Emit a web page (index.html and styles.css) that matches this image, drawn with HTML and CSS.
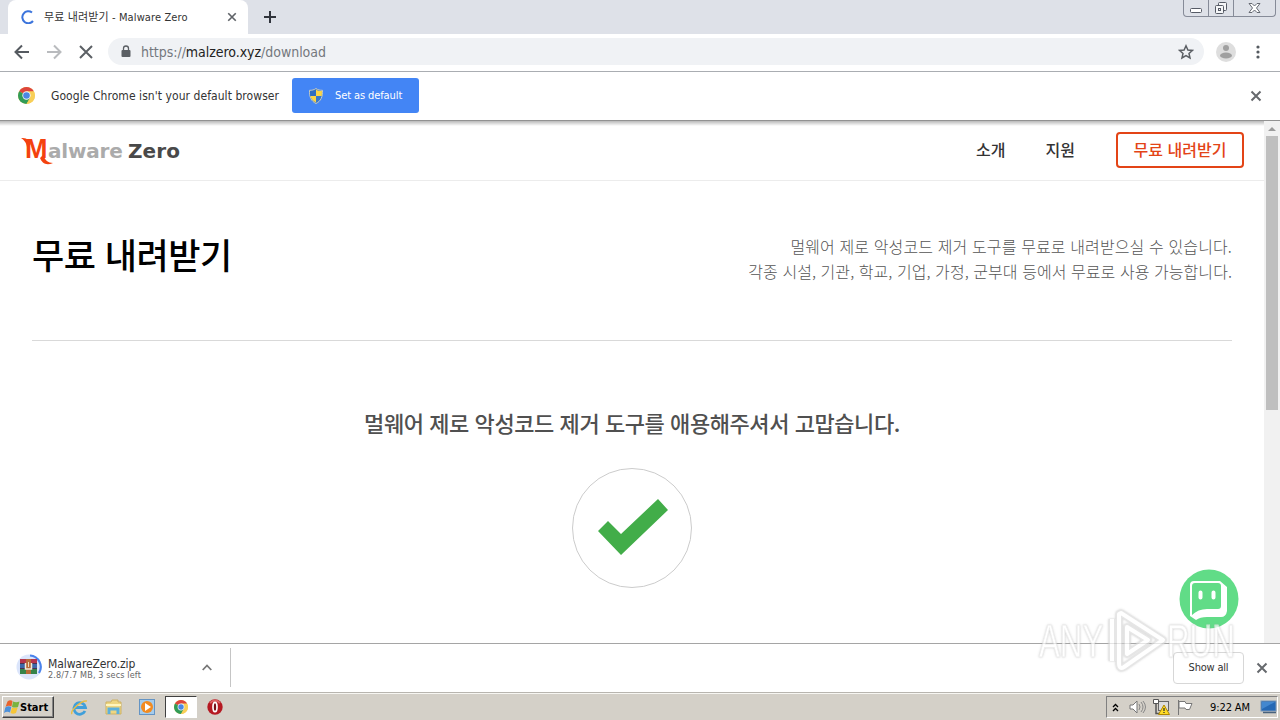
FILE: index.html
```html
<!DOCTYPE html>
<html lang="ko">
<head>
<meta charset="utf-8">
<title>무료 내려받기 - Malware Zero</title>
<link rel="stylesheet" href="styles.css">
</head>
<body>
<svg width="0" height="0" class="defs">
  <defs>
    <symbol id="chrome" viewBox="0 0 16 16">
      <circle cx="8" cy="8" r="8" fill="#f8cf58"/>
      <path d="M8 8 1.100 4A8 8 0 0 1 14.900 4Z" fill="#dd453c"/>
      <path d="M1.100 4A8 8 0 0 0 8 16L11.400 10 8 8Z" fill="#319c57"/>
      <path d="M8 4h6.900A8 8 0 0 1 8 16l3.500-6Z" fill="#f8cf58"/>
      <circle cx="8" cy="8" r="3.900" fill="#f4f6fa"/><circle cx="8" cy="8" r="3.100" fill="#4a87e4"/>
    </symbol>
    <symbol id="cross" viewBox="0 0 12 12"><path d="M1.500 1.500l9 9M10.500 1.500l-9 9" fill="none" stroke="currentColor" stroke-width="2"/></symbol>
  </defs>
</svg>
<div class="screen">
  <header class="tabstrip">
    <div class="tab">
      <svg class="spinner" width="14" height="14" viewBox="0 0 14 14"><path d="M12 11A6 6 0 1 1 11 2.500" fill="none" stroke="#3b74dc" stroke-width="2"/></svg>
      <span class="tab-title">무료 내려받기 - Malware Zero</span>
      <svg class="tab-close" width="10" height="10"><use href="#cross"/></svg>
    </div>
    <svg class="new-tab" width="12" height="12" viewBox="0 0 12 12"><path d="M6 0v12M0 6h12" stroke="#30343c" stroke-width="2"/></svg>
    <div class="window-buttons">
      <span class="wb"><svg width="13" height="6" viewBox="0 0 13 6"><rect x=".5" y=".5" width="11" height="4" rx="1" fill="#fff" stroke="#565b66"/></svg></span>
      <span class="wb"><svg width="14" height="14" viewBox="0 0 14 14" fill="#f5f6f8" stroke="#565b66"><rect x="4.500" y="1.500" width="8" height="8" rx="1"/><rect x="1.500" y="4.500" width="8" height="8" rx="1"/><rect x="4.500" y="7.500" width="2" height="2"/></svg></span>
      <span class="wb wide"><svg width="13" height="12" viewBox="0 0 13 12"><path d="M1 1.500h3l2.500 2.500L9 1.500h3L8.500 6l3.500 4.500H9L6.500 8 4 10.500H1L4.500 6Z" fill="#fff" stroke="#666a73"/></svg></span>
    </div>
  </header>

  <div class="toolbar">
    <svg class="nav-icon" width="16" height="16" viewBox="0 0 16 16"><path d="M15 8H2M8 1.500 1.500 8 8 14.500" fill="none" stroke="#555a60" stroke-width="2"/></svg>
    <svg class="nav-icon" width="16" height="16" viewBox="0 0 16 16"><path d="M1 8h13M8 1.500 14.500 8 8 14.500" fill="none" stroke="#b9bbbe" stroke-width="2"/></svg>
    <svg class="nav-icon" width="16" height="16" viewBox="0 0 16 16"><path d="M2 2l12 12M14 2 2 14" fill="none" stroke="#5c6065" stroke-width="2"/></svg>
    <div class="omnibox">
      <svg width="10" height="13" viewBox="0 0 10 13"><rect x=".5" y="5" width="9" height="7" rx="1" fill="#5b5f64"/><path d="M2.500 5V3.500a2.500 2.500 0 0 1 5 0V5" fill="none" stroke="#5b5f64" stroke-width="1.300"/></svg>
      <span class="url">https://<b>malzero.xyz</b>/download</span>
      <svg class="star" width="16" height="16" viewBox="0 0 16 16"><path d="M8 1.800l1.900 4.200 4.500.4-3.400 3 1 4.500-4-2.400-4 2.400 1-4.500-3.400-3L6.100 6Z" fill="none" stroke="#5b5f64" stroke-width="1.500"/></svg>
    </div>
    <svg class="avatar" width="20" height="20" viewBox="0 0 20 20"><circle cx="10" cy="10" r="10" fill="#dedede"/><circle cx="10" cy="6" r="3" fill="#a0a0a0"/><ellipse cx="10" cy="13.500" rx="6" ry="3" fill="#a0a0a0"/></svg>
    <svg class="kebab" width="4" height="14" viewBox="0 0 4 14" fill="#555a60"><circle cx="2" cy="2" r="1.600"/><circle cx="2" cy="7" r="1.600"/><circle cx="2" cy="12" r="1.600"/></svg>
  </div>

  <div class="infobar">
    <svg width="17" height="17"><use href="#chrome"/></svg>
    <span class="info-text">Google Chrome isn't your default browser</span>
    <button class="default-btn">
      <svg width="14" height="16" viewBox="0 0 14 16"><path d="M7 .5C9 2 11 2.300 13.500 2.300 13.700 9 12 13 7 15.500 2 13 .3 9 .5 2.300 3 2.300 5 2 7 .5Z" fill="#3a78c9" stroke="#c9cbbd"/><path d="M7 1.500V8H1.300C1 6 1 5 1.100 3 4 3 5.500 2.500 7 1.500Z" fill="#2f6dc2"/><path d="M7 1.500V8h5.700C13 6 13 5 12.900 3 10 3 8.500 2.500 7 1.500ZM7 8v6.500C4 13 2 11 1.400 8Z" fill="#fbd548"/></svg>
      <span>Set as default</span>
    </button>
    <svg class="info-close" width="12" height="12"><use href="#cross"/></svg>
  </div>

  <div class="viewport">
    <main class="page">
      <div class="site-header">
        <div class="logo">
          <span class="logo-m">M</span><span class="logo-alware">alware</span><span class="logo-zero">Zero</span>
          <svg class="swoosh" width="34" height="28" viewBox="0 0 34 28" fill="#f4420f"><path d="M0 0C5 0 8 1 10 6L6 9C5 4 3 2 0 0ZM22 17C24 22 27 25 32 25 25 28 21 25 19 20Z"/></svg>
        </div>
        <nav class="site-nav">
          <span>소개</span><span>지원</span><span class="cta">무료 내려받기</span>
        </nav>
      </div>
      <section class="intro">
        <h1>무료 내려받기</h1>
        <p><span class="first">멀웨어 제로 악성코드 제거 도구를 무료로 내려받으실 수 있습니다.</span><br><span class="second">각종 시설, 기관, 학교, 기업, 가정, 군부대 등에서 무료로 사용 가능합니다.</span></p>
      </section>
      <section class="thanks">
        <h2>멀웨어 제로 악성코드 제거 도구를 애용해주셔서 고맙습니다.</h2>
        <div class="check"><svg width="70" height="56" viewBox="0 0 70 56"><path d="M0 32 10 22 23 35 60 0 70 11 23 56Z" fill="#42ad49"/></svg></div>
      </section>
    </main>
    <div class="scrollbar"><svg width="8" height="4" viewBox="0 0 8 4"><path d="M4 0l4 4H0Z" fill="#9b9b9b"/></svg><div class="thumb"></div></div>
    <svg class="chat" width="60" height="60" viewBox="0 0 60 60"><circle cx="30" cy="30" r="29.500" fill="#61dc87"/><path d="M15 12H41L48 18V42Q47 48 42 48H28Q21 48 17 51L11 47V16Q11 12 15 12Z" fill="#fff"/><path d="M16 14H39Q42 14 42 17V37Q42 40 39 40H28Q19 40 13 46V17Q13 14 16 14Z" fill="#61dc87"/><path d="M21.500 23.500v5M34.500 23.500v5" stroke="#fff" stroke-width="4" stroke-linecap="round"/></svg>
  </div>

  <div class="downloads">
    <div class="download-item">
      <svg width="28" height="28" viewBox="0 0 28 28"><circle cx="14" cy="13" r="12.500" fill="#dbe5fb"/><path d="M15 1.500A11.500 11.500 0 0 1 24 19" fill="none" stroke="#4a83ec" stroke-width="2.200"/><rect x="5" y="5" width="17" height="5" fill="#b5364e"/><rect x="5" y="10" width="17" height="5" fill="#3d68a9"/><rect x="5" y="15" width="17" height="5" fill="#36834a"/><path d="M5 9.500h17M5 14.500h17" stroke="#4b3150"/><path d="M11 5h5v15h-5Z" fill="#b86a38"/><path d="M10.500 9v6h6V9" fill="none" stroke="#f0ead8" stroke-width="1.500"/><path d="M13.500 8v5" stroke="#eadcb8"/></svg>
      <div class="file"><span class="file-name">MalwareZero.zip</span><span class="file-status">2.8/7.7 MB, 3 secs left</span></div>
      <svg class="chevron" width="10" height="7" viewBox="0 0 10 7"><path d="M.7 6 5 1.500 9.300 6" fill="none" stroke="#777" stroke-width="1.800"/></svg>
    </div>
    <button class="show-all">Show all</button>
    <svg class="dl-close" width="12" height="12"><use href="#cross"/></svg>
  </div>

  <footer class="taskbar">
    <div class="start">
      <svg width="16" height="16" viewBox="0 0 16 16"><path d="M3.500 2.500Q6 .5 8.500 2L7.500 7.500Q4.500 6 1.500 8Z" fill="#e8632c"/><path d="M9 2.500Q12 4 15.500 2.500L14 8Q11 9 8 8Z" fill="#7ab33e"/><path d="M1.300 8.500Q4 6.500 7.300 8L6 13.500Q3 12 0 14Z" fill="#4c91da"/><path d="M8 8.500Q11 9.500 13.700 8.500L12 14Q9 15.500 6.500 14Z" fill="#f6c638"/></svg>
      <span>Start</span>
    </div>
    <div class="quick">
      <span class="task"><svg width="17" height="17" viewBox="0 0 17 17"><path d="M14 12A5.800 5.800 0 1 1 14.500 8.500H4" fill="none" stroke="#409fda" stroke-width="2.800"/><path d="M1 15C-1 12 10 1 16 2" fill="none" stroke="#e8bd45" stroke-width="1.500"/></svg></span>
      <span class="task"><svg width="17" height="16" viewBox="0 0 17 16"><path d="M1 3h5l1-2h6v2h3v12H1Z" fill="#eed681" stroke="#cdb165"/><path d="M1 6h15" stroke="#fff5bd" stroke-width="2"/><path d="M4 15v-5h9v5" fill="none" stroke="#5cb0dc" stroke-width="3"/></svg></span>
      <span class="task"><svg width="16" height="16" viewBox="0 0 16 16"><rect x=".5" y=".5" width="15" height="15" fill="#a5ccec" stroke="#6494c4"/><circle cx="8" cy="8" r="6" fill="#f28b21"/><path d="M6 4l6 4-6 4Z" fill="#fff"/></svg></span>
      <span class="task active"><svg width="14" height="14"><use href="#chrome"/></svg></span>
      <span class="task"><svg width="16" height="16" viewBox="0 0 16 16"><circle cx="8" cy="8" r="7.700" fill="#b51922"/><path d="M3 4Q8-1 13 4" fill="none" stroke="#dc6062" stroke-width="2"/><ellipse cx="8" cy="8" rx="2" ry="4.700" fill="#761018" stroke="#fff" stroke-width="1.700"/></svg></span>
    </div>
    <div class="tray">
      <svg class="up" width="7" height="9" viewBox="0 0 7 9"><path d="M1 4l2.500-2.500L6 4M1 8l2.500-2.500L6 8" fill="none" stroke="#000" stroke-width="1.300"/></svg>
      <svg class="sound" width="17" height="16" viewBox="0 0 17 16"><path d="M1 6h3l4-4v12l-4-4H1Z" fill="#fff" stroke="#777"/><path d="M10 5q2 3 0 6M12 3q4 5 0 10M14 2q5 6 0 12" fill="none" stroke="#888"/></svg>
      <svg class="net" width="17" height="16" viewBox="0 0 17 16"><rect x="5.500" y="2.500" width="10" height="9" fill="#ddd" stroke="#666"/><path d="M.5.500h5v4h-5Z" fill="#fff" stroke="#555"/><path d="M3 5v9.500h5" fill="none" stroke="#555" stroke-width="1.500"/><path d="M11 6l5.500 9.500h-11Z" fill="#ffdc25" stroke="#b08700"/><path d="M11 9v3m0 1v1" stroke="#333" stroke-width="1.300"/></svg>
      <svg class="flag" width="17" height="15" viewBox="0 0 17 15"><path d="M1.500 0v15M2 1.500h6l1 2h6l-2.500 6H9L8 8H2Z" fill="#fff" stroke="#777"/></svg>
      <time>9:22 AM</time>
      <svg class="desk" width="17" height="14" viewBox="0 0 17 14"><rect x="1" y="1" width="15" height="10" fill="#2568b5" stroke="#7896b8"/><path d="M2 2h13L2 9Z" fill="#4387cf"/><path d="M3 12.500h13" stroke="#48627d" stroke-width="1.500"/></svg>
    </div>
  </footer>

  <div class="watermark">
    <span>ANY</span>
    <svg width="60" height="64" viewBox="0 0 60 64" fill="none" stroke-linejoin="round"><path d="M14 4 56 31 17 58Q12 61 12 54V5ZM5 10V52M20 18 41 31 20 45Z" stroke="#dcdcdc" stroke-width="7"/><path d="M14 4 56 31 17 58Q12 61 12 54V5ZM5 10V52M20 18 41 31 20 45Z" stroke="#fff" stroke-width="4"/></svg>
    <span>RUN</span>
  </div>
</div>
</body>
</html>
```
FILE: styles.css
```css
* { box-sizing: border-box; }
body { margin: 0; }
svg { display: block; flex: none; }
.defs { position: absolute; }
.screen {
  position: relative; width: 1280px; height: 720px; overflow: hidden;
  display: flex; flex-direction: column; background: #fff;
  font-family: "DejaVu Sans Condensed", "DejaVu Sans", "Noto Sans CJK KR", sans-serif;
  font-stretch: condensed; font-size: 12px; color: #333; white-space: nowrap;
}
.tabstrip { height: 34px; flex: none; background: #dee1e8; display: flex; padding-left: 8px; }
.tab { width: 240px; height: 34px; background: #fff; border-radius: 8px 8px 0 0; display: flex; align-items: center; padding: 0 11px 0 13px; }
.tab-title { margin: -2px 0 0 9px; flex: 1; font-size: 11px; letter-spacing: .12px; }
.tab-close { color: #5f6368; }
.new-tab { margin: 11px 0 0 16px; }
.window-buttons { margin: 0 4px 0 auto; height: 17px; display: flex; border: 1px solid #868b98; border-top: 0; border-radius: 0 0 4px 4px; }
.wb { width: 25px; display: flex; justify-content: center; align-items: center; border-right: 1px solid #868b98; }
.wb:first-child { padding-top: 5px; }
.wide { width: 41px; border: 0; }
.toolbar { height: 38px; flex: none; display: flex; align-items: center; border-bottom: 1px solid #aaadb2; padding: 0 20px 2px 14px; }
.nav-icon { margin-right: 16px; }
.omnibox { margin-left: -2px; width: 1096px; height: 27px; border-radius: 14px; background: #f0f2f5; display: flex; align-items: center; padding: 0 10px 0 13px; }
.url { margin-left: 10px; flex: 1; font-size: 14px; color: #74787d; letter-spacing: -.04px; }
.url b { font-weight: 400; color: #222; }
.avatar { margin-left: 12px; }
.kebab { margin-left: 20px; }
.infobar { height: 49px; flex: none; display: flex; align-items: center; border-bottom: 1px solid #929292; padding: 0 18px 1px; }
.info-text { margin-left: 16px; width: 241px; font-size: 12px; letter-spacing: .06px; }
.default-btn { border: 0; width: 127px; height: 35px; border-radius: 3px; background: #4385f5; color: #fff; display: flex; align-items: center; padding: 0 0 0 17px; gap: 12px; font: 11px "DejaVu Sans Condensed", sans-serif; font-stretch: condensed; letter-spacing: -.1px; }
.info-close { margin-left: auto; color: #66696d; }
.viewport { height: 522px; flex: none; position: relative; display: flex; font-family: "Noto Sans CJK KR", sans-serif; font-stretch: normal; background: linear-gradient(#b9b9b9, #fff 5px); }
.page { width: 1264px; }
.site-header { height: 60px; border-bottom: 1px solid #ececec; display: flex; justify-content: space-between; padding: 0 20px 0 21px; }
.logo { position: relative; display: flex; align-items: baseline; height: 46px; padding-top: 13px; font: bold 20px/30px "DejaVu Sans", sans-serif; }
.logo-m { color: #f4420f; width: 27px; padding-left: 4px; font: bold 27px/30px "Liberation Sans", sans-serif; }
.logo-alware { color: #ababab; width: 80px; letter-spacing: -.2px; }
.logo-zero { color: #494949; letter-spacing: .1px; }
.swoosh { position: absolute; left: 0; top: 17px; }
.site-nav { display: flex; gap: 40px; padding-top: 11px; font-size: 16px; font-weight: 500; line-height: 34px; color: #333; }
.site-nav span { position: relative; left: -1px; }
.site-nav .cta { left: 0; width: 128px; height: 36px; line-height: 30px; border: 2px solid #e34416; border-radius: 4px; color: #e34416; text-align: center; }
.intro { height: 160px; margin: 0 32px; border-bottom: 1px solid #d9d9d9; display: flex; justify-content: space-between; }
.intro h1 { margin: 46px 0 0; font-size: 35px; line-height: 54px; letter-spacing: -.45px; font-weight: 500; color: #000; }
.intro p { margin: 53px 0 0; font-size: 16px; line-height: 25px; text-align: right; color: #555; font-weight: 300; }
.first { letter-spacing: .12px; }
.second { letter-spacing: .06px; }
.thanks { display: flex; flex-direction: column; align-items: center; }
.thanks h2 { margin: 65px 0 0; font-size: 22px; line-height: 32px; letter-spacing: -.43px; font-weight: 500; color: #505050; }
.check { margin-top: 30px; width: 120px; height: 120px; border: 1px solid #ccc; border-radius: 50%; display: flex; align-items: center; justify-content: center; padding-left: 2px; padding-bottom: 2px; }
.scrollbar { width: 16px; background: #f1f1f1; display: flex; flex-direction: column; align-items: center; padding-top: 6px; }
.thumb { margin-top: 5px; width: 12px; height: 274px; background: #bfbfbf; }
.chat { position: absolute; left: 1179px; top: 448px; }
.downloads { height: 49px; flex: none; border-top: 1px solid #a5a5a5; background: #fff; display: flex; align-items: center; padding: 0 12px 1px 0; }
.download-item { width: 231px; height: 39px; border-right: 1px solid #c5c5c5; display: flex; align-items: center; padding: 0 18px 0 15px; }
.file { margin: 3px 0 0 5px; flex: 1; display: flex; flex-direction: column; }
.file-name { font-size: 12px; line-height: 12px; letter-spacing: -.1px; }
.file-status { font-size: 9px; line-height: 10px; color: #666; letter-spacing: .13px; }
.show-all { margin-left: auto; width: 71px; height: 32px; background: #fff; border: 1px solid #d7d7d7; border-radius: 4px; padding: 0; color: #333; font: 11px "DejaVu Sans Condensed", sans-serif; font-stretch: condensed; letter-spacing: -.2px; }
.dl-close { margin-left: 12px; color: #66696d; }
.taskbar { height: 28px; flex: none; background: #d4d0c8; border-top: 1px solid #b8b5af; display: flex; align-items: center; padding: 1px 2px 0; box-shadow: inset 0 1px #f7f6f2; color: #000; }
.start { width: 52px; height: 22px; border: 1px solid; border-color: #fff #404040 #404040 #fff; box-shadow: inset -1px -1px #868686; display: flex; align-items: center; padding-left: 1px; font: bold 11px "DejaVu Sans Condensed", sans-serif; font-stretch: condensed; }
.quick { display: flex; margin-left: 9px; gap: 2px; }
.task { width: 32px; height: 22px; display: flex; align-items: center; justify-content: center; }
.active { background: #fff; border: 1px solid; border-color: #404040 #fff #fff #404040; }
.tray { margin-left: auto; width: 172px; height: 22px; border: 1px solid; border-color: #808080 #fff #fff #808080; display: flex; align-items: center; padding-left: 5px; font-size: 11px; }
.sound { margin-left: 10px; }
.net { margin-left: 7px; }
.flag { margin-left: 7px; }
.tray time { margin-left: 16px; width: 50px; font-size: 11px; letter-spacing: -.1px; }
.watermark { position: absolute; left: 1039px; top: 608px; width: 196px; height: 66px; display: flex; align-items: center; opacity: .7; font: 46px "Liberation Sans", sans-serif; color: #fff; -webkit-text-stroke: 1px #e8e8e8; text-shadow: 0 0 3px #999; }
.watermark svg { filter: drop-shadow(0 0 1px #bbb); }
.watermark span { display: block; width: 68px; flex: none; transform: scaleX(.68); transform-origin: left; }
```
